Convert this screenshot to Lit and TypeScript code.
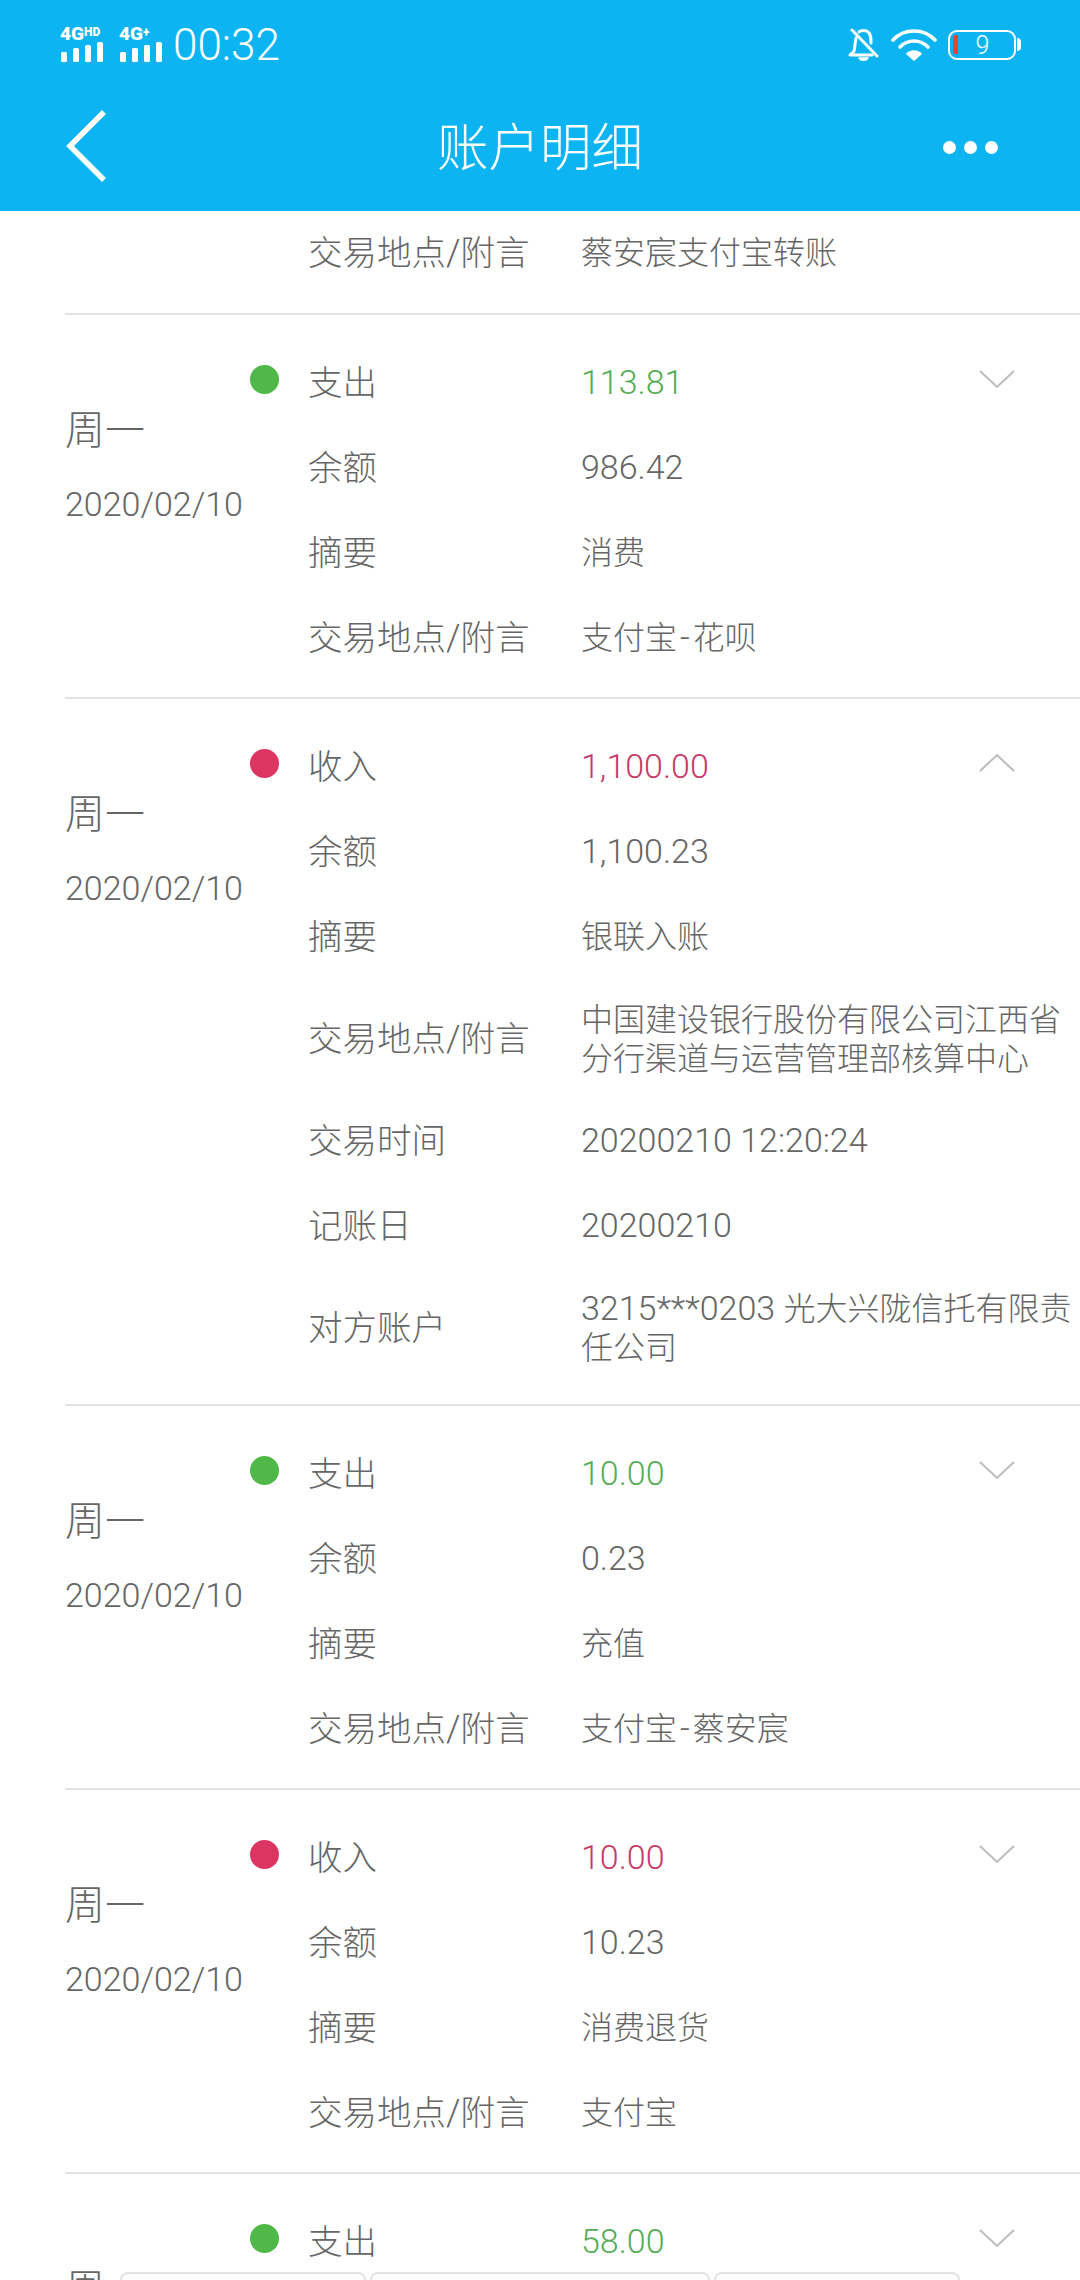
import { LitElement, html, css } from "lit";
import { customElement } from "lit/decorators.js";

type Field = [string, string];
interface Entry {
  kind: "out" | "in";
  open?: boolean;
  clipped?: boolean;
  amount: string;
  fields: Field[];
}

const ENTRIES: Entry[] = [
  { kind: "out", amount: "113.81", fields: [["余额", "986.42"], ["摘要", "消费"], ["交易地点/附言", "支付宝-花呗"]] },
  {
    kind: "in", open: true, amount: "1,100.00",
    fields: [
      ["余额", "1,100.23"], ["摘要", "银联入账"],
      ["交易地点/附言", "中国建设银行股份有限公司江西省分行渠道与运营管理部核算中心"],
      ["交易时间", "20200210 12:20:24"], ["记账日", "20200210"],
      ["对方账户", "3215***0203 光大兴陇信托有限责任公司"],
    ],
  },
  { kind: "out", amount: "10.00", fields: [["余额", "0.23"], ["摘要", "充值"], ["交易地点/附言", "支付宝-蔡安宸"]] },
  { kind: "in", amount: "10.00", fields: [["余额", "10.23"], ["摘要", "消费退货"], ["交易地点/附言", "支付宝"]] },
  { kind: "out", clipped: true, amount: "58.00", fields: [] },
];

/* Latin runs are set slightly larger than the CJK around them, as in the source font. */
function runs(text: string) {
  return text.split(/([\x20-\x7e]+)/).filter(Boolean).map((part) =>
    part === "-"
      ? html`<span class="dash">-</span>`
      : /^[\x20-\x7e]+$/.test(part)
        ? html`<span class="lat">${part}</span>`
        : part
  );
}

@customElement("app-root")
export class AppRoot extends LitElement {
  static styles = css`
    :host {
      display: block; width: 1080px; height: 2280px; overflow: hidden; position: relative;
      background: #fff; color: #666;
      font-family: Roboto, "Noto Sans CJK SC", sans-serif; font-weight: 300;
    }
    .top { background: #0cb5f2; height: 211px; color: #fff; display: flex; flex-direction: column; }
    .status { height: 90px; display: flex; align-items: center; justify-content: space-between; padding: 0 59px 0 60px; }
    .left, .right { display: flex; align-items: center; }
    .net { display: flex; flex-direction: column; width: 59px; font: 700 19px/16px Roboto, sans-serif; margin-top: -3px; }
    .net b { display: block; white-space: nowrap; }
    .net sup { font-size: 12px; line-height: 10px; vertical-align: 4px; }
    .bars { display: flex; align-items: flex-end; gap: 6px; height: 20px; margin-top: 0; padding-left: 1px; }
    .bars i { display: block; width: 6px; background: #fff; border-radius: 1.5px; }
    .time { font-size: 44px; line-height: 48px; font-weight: 300; margin-left: -5px; }
    .right { gap: 11px; }
    .battery { position: relative; width: 68px; height: 30px; border: 2px solid #fff; border-radius: 9px; box-sizing: border-box; margin-right: 5px;
      display: flex; align-items: center; justify-content: center; font-size: 25px; padding-left: 1px; }
    .battery .low { position: absolute; left: 3px; top: 3px; bottom: 4px; width: 5px; background: #e8452f; border-radius: 3px 0 0 3px; }
    .battery .nub { position: absolute; right: -7px; top: 6px; width: 4px; height: 13px; background: #fff; border-radius: 0 4px 4px 0; }
    .nav { flex: 1; display: grid; grid-template-columns: 1fr auto 1fr; align-items: center; padding: 0 65px 10px; }
    .title { font-size: 51.5px; font-weight: 300; line-height: 60px; padding-top: 6px; }
    .dots { justify-self: end; display: flex; gap: 8px; margin: 4px 17px 0 0; }
    .dots i { display: block; width: 13px; height: 13px; border-radius: 50%; background: #fff; }
    svg { display: block; }
    .partial { height: 104px; margin-left: 65px; border-bottom: 2px solid #e2e2e2; box-sizing: border-box; padding-left: 243px; display: flex; }
    .partial .row { height: 85px; }
    .entry { margin-left: 65px; border-bottom: 2px solid #e2e2e2; display: flex; padding-bottom: 16px; }
    .when { width: 243px; flex: none; display: flex; flex-direction: column; padding-top: 50px; }
    .dot { align-self: flex-end; width: 29px; height: 29px; border-radius: 50%; margin-right: 29px; }
    .dot.out { background: #4fb848; }
    .dot.in { background: #dd3562; }
    .day { font-size: 40px; line-height: 48px; margin-top: 13px; color: #666; }
    .date { font-size: 34px; line-height: 40px; margin-top: 29px; white-space: nowrap; }
    .fields { flex: 1; min-width: 0; padding-top: 26px; }
    .row { display: flex; align-items: center; min-height: 85px; }
    .label { width: 273px; flex: none; font-size: 34.5px; white-space: nowrap; padding-bottom: 7px; }
    .value { flex: 1; min-width: 0; font-size: 32px; line-height: 38.5px; padding: 21px 0; word-break: break-all; }
    .lat { font-size: 1.0625em; line-height: 1; }
    .dash { font-size: 1.0625em; line-height: 1; margin: 0 3px; }
    .value.out { color: #55ad55; }
    .value.in { color: #c73a68; }
    .chev { margin: -10px 64px 0 0; flex: none; }
    .mask { position: absolute; top: 2272px; height: 30px; box-sizing: border-box; background: #fff; border: 2px solid #e2e2e2; border-radius: 8px; }
    .m1 { left: 120px; width: 246px; }
    .m2 { left: 370px; width: 340px; }
    .m3 { left: 714px; width: 246px; }
  `;

  private chevron(open: boolean) {
    return html`<svg class="chev" width="38" height="20" viewBox="0 0 38 20" fill="none" stroke="#bcbcbc" stroke-width="2">
      <path d=${open ? "M2 18 19 2 36 18" : "M2 2 19 18 36 2"}></path></svg>`;
  }

  private statusLeft(sup: string) {
    const heights = [10, 14, 17, 20];
    return html`<div class="net"><b>4G<sup>${sup}</sup></b>
      <div class="bars">${heights.map((h) => html`<i style="height:${h}px"></i>`)}</div></div>`;
  }

  private entry(e: Entry) {
    return html`<div class="entry">
      <div class="when">
        <span class="dot ${e.kind}"></span>
        <div class="day">周一</div>
        ${e.clipped ? "" : html`<div class="date"><span>2020/02/10</span></div>`}
      </div>
      <div class="fields">
        <div class="row">
          <div class="label">${e.kind === "out" ? "支出" : "收入"}</div>
          <div class="value ${e.kind}">${runs(e.amount)}</div>
          ${this.chevron(!!e.open)}
        </div>
        ${e.fields.map(([k, v]) => html`<div class="row"><div class="label">${runs(k)}</div><div class="value">${runs(v)}</div></div>`)}
      </div>
    </div>`;
  }

  render() {
    return html`
      <div class="top">
        <div class="status">
          <div class="left">${this.statusLeft("HD")}${this.statusLeft("+")}<div class="time">00:32</div></div>
          <div class="right">
            <svg width="32" height="34" viewBox="0 0 32 34" fill="none" stroke="#fff" stroke-width="3" stroke-linecap="round" stroke-linejoin="round">
              <path d="M8 10C7 14 7 20 6 23 5 25 3 26 2 27H24M11 4C13 2 18 2 20 4 23 6 23 10 23 15"></path>
              <path d="M4 2 29 28"></path>
              <path d="M11 30C13 33 18 33 20 30Z" fill="#fff" stroke-width="1.5"></path>
            </svg>
            <svg width="46" height="34" viewBox="0 0 46 34" fill="none" stroke="#fff" stroke-width="3.6" stroke-linecap="round">
              <path d="M2 12C13 0 33 0 44 12"></path>
              <path d="M9 19C17 11 29 11 37 19"></path>
              <path d="M23 33 15 26C19 21 27 21 31 26Z" fill="#fff" stroke="none"></path>
            </svg>
            <div class="battery"><span class="low"></span>9<span class="nub"></span></div>
          </div>
        </div>
        <div class="nav">
          <svg width="42" height="72" viewBox="0 0 42 72" fill="none" stroke="#fff" stroke-width="5.5"><path d="M39 2 5 36 39 70"></path></svg>
          <div class="title">账户明细</div>
          <div class="dots"><i></i><i></i><i></i></div>
        </div>
      </div>
      <div class="partial"><div class="row"><div class="label">${runs("交易地点/附言")}</div><div class="value">蔡安宸支付宝转账</div></div></div>
      ${ENTRIES.map((e) => this.entry(e))}
      <div class="mask m1"></div><div class="mask m2"></div><div class="mask m3"></div>
    `;
  }
}
